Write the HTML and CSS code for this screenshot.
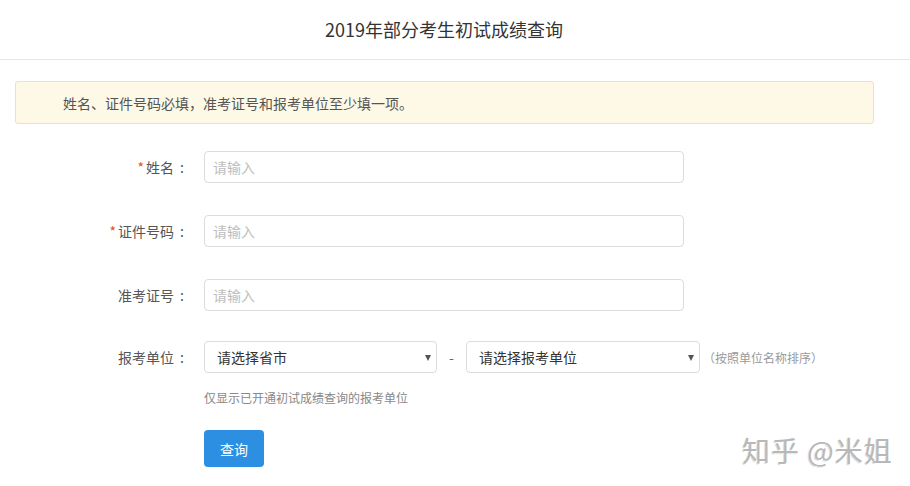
FILE: index.html
```html
<!DOCTYPE html>
<html lang="zh-CN">
<head>
<meta charset="utf-8">
<title>2019年部分考生初试成绩查询</title>
<link rel="stylesheet" href="styles.css">
</head>
<body>
<header class="header"><h1 class="title">2019年部分考生初试成绩查询</h1></header>
<main class="main">
  <div class="alert">姓名、证件号码必填，准考证号和报考单位至少填一项。</div>
  <form class="form">
    <div class="row">
      <label class="label"><span class="req">*</span>姓名<span class="colon">:</span></label>
      <input class="input" type="text" placeholder="请输入">
    </div>
    <div class="row">
      <label class="label"><span class="req">*</span>证件号码<span class="colon">:</span></label>
      <input class="input" type="text" placeholder="请输入">
    </div>
    <div class="row">
      <label class="label">准考证号<span class="colon">:</span></label>
      <input class="input" type="text" placeholder="请输入">
    </div>
    <div class="row row-select">
      <label class="label">报考单位<span class="colon">:</span></label>
      <div class="select sel-1"><span>请选择省市</span><i class="caret"></i></div>
      <span class="dash">-</span>
      <div class="select sel-2"><span>请选择报考单位</span><i class="caret"></i></div>
      <span class="note">（按照单位名称排序）</span>
    </div>
    <div class="hint">仅显示已开通初试成绩查询的报考单位</div>
    <div class="actions"><button class="btn" type="button">查询</button></div>
  </form>
</main>
<div class="watermark">知乎 @米姐</div>
</body>
</html>
```
FILE: styles.css
```css
* { box-sizing: border-box; }
html, body { margin: 0; padding: 0; background: #fff; }
body {
  font-family: "Noto Sans CJK SC", "Microsoft YaHei", sans-serif;
  color: #555;
  font-size: 14px;
  width: 910px;
  height: 486px;
  overflow: hidden;
  position: relative;
}
.header {
  height: 60px;
  border-bottom: 1px solid #e6e6e6;
  display: flex;
  align-items: center;
  justify-content: center;
  padding-right: 22px;
}
.title {
  margin: 0;
  font-size: 18px;
  font-weight: normal;
  color: #333;
  line-height: 24px;
  padding-bottom: 2px;
}
.main { padding-top: 21px; }
.alert {
  margin-left: 15px;
  width: 859px;
  height: 43px;
  background: #fdf9e6;
  border: 1px solid #f3e1b0;
  border-radius: 3px;
  padding-left: 47px;
  display: flex;
  align-items: center;
  color: #555;
  font-size: 14px;
}
.form { padding-top: 27px; }
.row {
  display: flex;
  align-items: center;
  height: 32px;
  margin-bottom: 32px;
}
.row-select { margin-top: -2px; margin-bottom: 0; }
.label {
  width: 190px;
  text-align: right;
  margin-right: 14px;
  color: #555;
  font-size: 14px;
  white-space: nowrap;
}
.colon { display: inline-block; width: 16px; text-align: center; }
.req { color: #e0541f; margin-right: 2px; font-size: 14px; }
.input {
  width: 480px;
  height: 32px;
  border: 1px solid #dcdcdc;
  border-radius: 4px;
  padding: 0 8px;
  font-family: inherit;
  font-size: 14px;
  color: #333;
  outline: none;
  background: #fff;
}
.input::placeholder { color: #bdbdbd; }
.select {
  position: relative;
  height: 32px;
  border: 1px solid #dcdcdc;
  border-radius: 4px;
  padding: 0 12px;
  display: flex;
  align-items: center;
  color: #333;
  font-size: 14px;
}
.sel-1 { width: 233px; }
.sel-2 { width: 234px; }
.caret {
  position: absolute;
  right: 5px;
  top: 13px;
  width: 0;
  height: 0;
  border-left: 3px solid transparent;
  border-right: 3px solid transparent;
  border-top: 6px solid #555;
}
.dash { width: 29px; text-align: center; color: #666; }
.note { margin-left: 3px; font-size: 12px; color: #999; white-space: nowrap; }
.hint {
  margin-left: 204px;
  margin-top: 16px;
  font-size: 12px;
  color: #888;
  line-height: 17px;
}
.actions { margin-left: 204px; margin-top: 24px; }
.btn {
  width: 60px;
  height: 37px;
  border: 0;
  border-radius: 4px;
  background: #2d8fe2;
  color: #fff;
  font-family: inherit;
  font-size: 14px;
  padding: 0;
}
.watermark {
  position: absolute;
  left: 742px;
  top: 430px;
  font-size: 28px;
  color: #b8b8b8;
  letter-spacing: 1px;
  text-shadow: 1px 1px 0 #fff, -1px 1px 0 #ddd;
  white-space: nowrap;
}
```
